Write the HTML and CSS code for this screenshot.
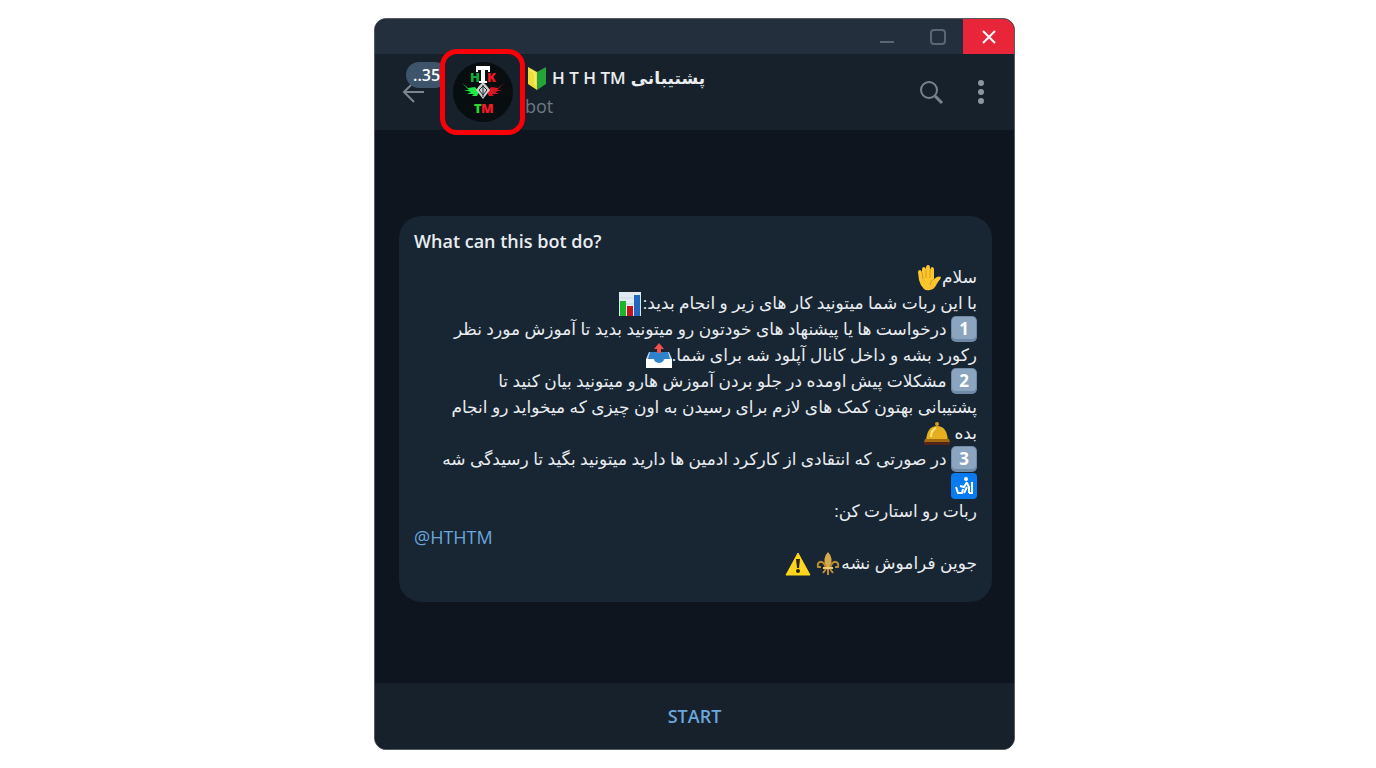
FILE: index.html
```html
<!DOCTYPE html>
<html lang="en">
<head>
    <meta charset="UTF-8">
    <meta name="viewport" content="width=device-width, initial-scale=1.0">
    <title>H T H TM</title>
    <link rel="stylesheet" href="styles.css">
</head>
<body>
    <!-- Icon shapes -->
    <svg class="sprite" aria-hidden="true">
        <symbol id="hand" viewBox="0 0 24 26">
            <path d="M7 24Q3 20 2 15L1 7Q1 5 3 5Q4 5 5 7V4Q5 2 7 2Q8 2 9 4V3Q9 0 11 0Q13 0 13 3V5Q14 2 15 2Q17 2 17 5V14L20 12Q22 11 24 12Q24 14 21 17L18 22Q16 25 13 25Q9 26 7 24Z" fill="#fdc62f"/>
            <path d="M5 7L6 14M9 5V13M13 5V13M17 14Q13 16 13 20" fill="none" stroke="#d29a1c"/>
        </symbol>
        <symbol id="chart" viewBox="0 0 24 26">
            <path d="M1 1H23V25H1Z" fill="#dfeaf2"/>
            <path d="M1 7H23 M1 13H23 M1 19H23" stroke="#cbd9e3"/>
            <path d="M2 10H8V25H2Z" fill="#1db32b"/>
            <path d="M9 15H15V25H9Z" fill="#c5131c"/>
            <path d="M16 4H22V25H16Z" fill="#2167c0"/>
        </symbol>
        <symbol id="keycap" viewBox="0 0 26 26">
            <rect x="0" y="0" width="26" height="26" rx="5" fill="#6f8aa7"/>
            <rect x="1" y="1" width="24" height="22" rx="4" fill="#8ba5c0"/>
        </symbol>
        <symbol id="outbox" viewBox="0 0 26 26">
            <path d="M3 9H23L26 16V25H0V16Z" fill="#c4d7e5"/>
            <path d="M4 9H22L24 16H18Q17 20 13 20T8 16H2Z" fill="#2f82cc"/>
            <path d="M0 16H7Q9 20 13 20T19 16H26V25H0Z" fill="#fff"/>
            <path d="M13 0L18 6H15V10H11V6H8Z" fill="#f2504b"/>
        </symbol>
        <symbol id="bell" viewBox="0 0 26 26">
            <circle cx="13" cy="3" r="2" fill="#d69b22"/>
            <path d="M2 20Q3 5 13 5T24 20Z" fill="#e5af20"/>
            <path d="M7 16Q7 9 12 7" fill="none" stroke="#ffe675" stroke-width="2"/>
            <path d="M1 18H25L26 21H0Z" fill="#a36a0f"/>
            <path d="M0 21H26V24H0Z" fill="#53251a"/>
        </symbol>
        <symbol id="litter" viewBox="0 0 26 26">
            <rect x="0" y="0" width="26" height="26" rx="4" fill="#087bf0"/>
            <circle cx="15" cy="6" r="2" fill="#fff"/>
            <path d="M16 9L13 14L9 13 M16 10L18 14V20 M16 14L13 20" fill="none" stroke="#fff" stroke-width="2"/>
            <path d="M5 14L7 20H11L12 16 M18 20H21V9" fill="none" stroke="#fff" stroke-width="2"/>
        </symbol>
        <symbol id="lily" viewBox="0 0 24 26">
            <path d="M12 1Q18 7 14 16H10Q6 7 12 1Z" fill="#d5aa48"/>
            <path d="M10 17Q8 10 4 11Q1 12 2 16H5M14 17Q16 10 20 11Q23 12 22 16H19" fill="none" stroke="#b98a32" stroke-width="2"/>
            <path d="M7 16H17V18H7Z" fill="#f0ce71"/>
            <path d="M10 18L7 22M12 18V24M14 18L17 22" fill="none" stroke="#bd9038" stroke-width="2"/>
        </symbol>
        <symbol id="warning" viewBox="0 0 26 26">
            <path d="M13 2L25 24H1Z" fill="#ffd51d" stroke="#ffd51d" stroke-linejoin="round"/>
            <path d="M11 8H15L14 17H12Z" fill="#28251b"/>
            <circle cx="13" cy="20" r="2" fill="#28251b"/>
        </symbol>
    </svg>

    <main class="window">
        <div class="titlebar">
            <button class="win-btn" aria-label="Minimize">
                <svg width="20" height="20" viewBox="0 0 20 20"><path d="M3 15H17" stroke="#596674" stroke-width="2"/></svg>
            </button>
            <button class="win-btn" aria-label="Maximize">
                <svg width="20" height="20" viewBox="0 0 20 20"><rect x="3" y="3" width="14" height="14" rx="3" fill="none" stroke="#596674" stroke-width="2"/></svg>
            </button>
            <button class="win-btn close" aria-label="Close">
                <svg width="20" height="20" viewBox="0 0 20 20"><path d="M4 4L16 16M16 4L4 16" stroke="#fff" stroke-width="2"/></svg>
            </button>
        </div>

        <header class="chat-header">
            <button class="back" aria-label="Back">
                <svg width="24" height="24" viewBox="0 0 24 24"><path d="M22 12H2M12 2L2 12L12 22" fill="none" stroke="#7b858e" stroke-width="2"/></svg>
                <span class="badge">..35</span>
            </button>
            <div class="avatar-frame">
                <svg class="avatar" viewBox="0 0 60 60" role="img" aria-label="H T H TM">
                    <circle cx="30" cy="30" r="30" fill="#080d0f"/>
                    <text class="logo-text" x="17" y="20" fill="#17a93b">H</text>
                    <text class="logo-text" x="34" y="20" fill="#ed1725">K</text>
                    <path d="M23 4H37V10H35V8H32V19H34V21H26V19H28V8H25V10H23Z" fill="#fff"/>
                    <path d="M9 21L15 26L22 25L26 30L24 34H19L21 32H14L18 30L11 28L16 28Z" fill="#1eea42"/>
                    <path d="M51 21L45 26L38 25L34 30L36 34H41L39 32H46L42 30L49 28L44 28Z" fill="#d91724"/>
                    <path d="M30 20L34 24L37 28L30 37L23 28L26 24Z" fill="#c8cfcd"/>
                    <path d="M26 28L30 24L34 28L30 33ZM30 23V35" fill="none" stroke="#22292b"/>
                    <text class="logo-text" x="21" y="51" fill="#2dda29">T</text>
                    <text class="logo-text" x="28" y="51" fill="#f41b29">M</text>
                </svg>
            </div>
            <div class="chat-info">
                <h1>
                    <svg width="20" height="24" viewBox="0 0 20 24">
                        <path d="M1 1L10 6V24L1 18Z" fill="#f0dd3c"/>
                        <path d="M19 1L10 6V24L19 18Z" fill="#25a43a"/>
                        <path d="M3 4L8 7V19" fill="none" stroke="#faf38b"/>
                    </svg>
                    <span>H T H TM</span>
                    <span lang="fa">پشتیبانی</span>
                </h1>
                <p>bot</p>
            </div>
            <button class="icon-btn" aria-label="Search">
                <svg width="26" height="26" viewBox="0 0 26 26"><circle cx="11" cy="11" r="8" fill="none" stroke="#78838c" stroke-width="2"/><path d="M17 17L24 24" stroke="#78838c" stroke-width="3"/></svg>
            </button>
            <button class="icon-btn" aria-label="Menu">
                <svg width="26" height="26" viewBox="0 0 26 26" fill="#8d969e"><circle cx="13" cy="4" r="3"/><circle cx="13" cy="13" r="3"/><circle cx="13" cy="22" r="3"/></svg>
            </button>
        </header>

        <section class="chat">
            <article class="message">
                <h2>What can this bot do?</h2>
                <div class="message-text" lang="fa" dir="rtl">
                    <p>سلام<svg class="emoji"><use href="#hand"/></svg></p>
                    <p>با این ربات شما میتونید کار های زیر و انجام بدید:<svg class="emoji"><use href="#chart"/></svg></p>
                    <p><span class="key"><svg class="emoji"><use href="#keycap"/></svg><b>1</b></span> درخواست ها یا پیشنهاد های خودتون رو میتونید بدید تا آموزش مورد نظر</p>
                    <p>رکورد بشه و داخل کانال آپلود شه برای شما.<svg class="emoji"><use href="#outbox"/></svg></p>
                    <p><span class="key"><svg class="emoji"><use href="#keycap"/></svg><b>2</b></span> مشکلات پیش اومده در جلو بردن آموزش هارو میتونید بیان کنید تا</p>
                    <p>پشتیبانی بهتون کمک های لازم برای رسیدن به اون چیزی که میخواید رو انجام</p>
                    <p>بده <svg class="emoji"><use href="#bell"/></svg></p>
                    <p><span class="key"><svg class="emoji"><use href="#keycap"/></svg><b>3</b></span> در صورتی که انتقادی از کارکرد ادمین ها دارید میتونید بگید تا رسیدگی شه</p>
                    <p><svg class="emoji"><use href="#litter"/></svg></p>
                    <p>ربات رو استارت کن:</p>
                    <p dir="ltr"><a href="#">@HTHTM</a></p>
                    <p>جوین فراموش نشه<svg class="emoji"><use href="#lily"/></svg> <svg class="emoji"><use href="#warning"/></svg></p>
                </div>
            </article>
        </section>

        <button class="start">START</button>
    </main>
</body>
</html>
```

FILE: styles.css
```css
* {
    box-sizing: border-box;
}
body {
    font-family: "Open Sans", "Noto Sans", "DejaVu Sans", sans-serif;
    margin: 0;
    padding: 18px 0 18px 13px;
    min-height: 100vh;
    display: flex;
    justify-content: center;
    background-color: #fff;
    color: #e9edf0;
}
h1, h2, p {
    margin: 0;
}
button {
    border: none;
    background: none;
    padding: 0;
    font-family: inherit;
    cursor: pointer;
}
svg {
    flex-shrink: 0;
}
.sprite {
    position: absolute;
    width: 0;
    height: 0;
}
.window {
    width: 100%;
    max-width: 641px;
    display: flex;
    flex-direction: column;
    border: 1px solid #555b60;
    border-radius: 12px;
    background-color: #0e151f;
    overflow: hidden;
}
.titlebar {
    height: 35px;
    display: flex;
    justify-content: flex-end;
    background-color: #242f3d;
}
.win-btn {
    width: 51px;
    display: flex;
    align-items: center;
    justify-content: center;
}
.win-btn.close {
    background-color: #e92539;
}
.chat-header {
    height: 76px;
    padding: 0 8px 0 27px;
    display: flex;
    align-items: center;
    background-color: #17212b;
}
.back {
    position: relative;
    width: 38px;
    height: 24px;
    text-align: left;
}
.badge {
    position: absolute;
    left: 4px;
    top: -18px;
    width: 42px;
    height: 26px;
    padding-left: 7px;
    border-radius: 13px;
    background-color: #3e546a;
    color: #fff;
    font-size: 16px;
    font-weight: 600;
    line-height: 26px;
}
.avatar-frame {
    position: relative;
    width: 85px;
    height: 86px;
    flex-shrink: 0;
    display: flex;
    align-items: center;
    justify-content: center;
    border: 5px solid #fb0007;
    border-radius: 17px;
    background-color: #17212b;
}
.avatar {
    width: 60px;
    height: 60px;
}
.logo-text {
    font-size: 13px;
    font-weight: 800;
}
.chat-info {
    flex: 1;
    min-width: 0;
}
.chat-info h1 {
    display: flex;
    align-items: center;
    gap: 5px;
    padding-left: 2px;
    font-size: 17px;
    font-weight: 600;
    line-height: 28px;
    white-space: nowrap;
}
.chat-info p {
    font-size: 18px;
    line-height: 28px;
    color: #6d7883;
}
.icon-btn {
    width: 50px;
    height: 40px;
    display: flex;
    align-items: center;
    justify-content: center;
}
.chat {
    flex: 1;
    display: flex;
    align-items: center;
    padding: 4px 22px 0 24px;
}
.message {
    width: 100%;
    padding: 10px 15px 26px;
    border-radius: 22px;
    background-color: #182533;
}
.message h2 {
    margin-bottom: 8px;
    font-size: 18px;
    font-weight: 600;
    line-height: 30px;
}
.message-text {
    font-size: 17px;
}
.message-text p {
    height: 26px;
    line-height: 26px;
    white-space: nowrap;
}
.message-text a {
    color: #6ba7dc;
    font-size: 18px;
    font-weight: 500;
    text-decoration: none;
}
.emoji {
    width: 26px;
    height: 26px;
    vertical-align: middle;
}
.key {
    display: inline-grid;
    place-items: center;
    vertical-align: top;
}
.key .emoji,
.key b {
    grid-area: 1 / 1;
}
.key b {
    color: #fff;
}
.start {
    height: 66px;
    background-color: #17212b;
    color: #6ba7dc;
    font-size: 18px;
    font-weight: 600;
}
```
